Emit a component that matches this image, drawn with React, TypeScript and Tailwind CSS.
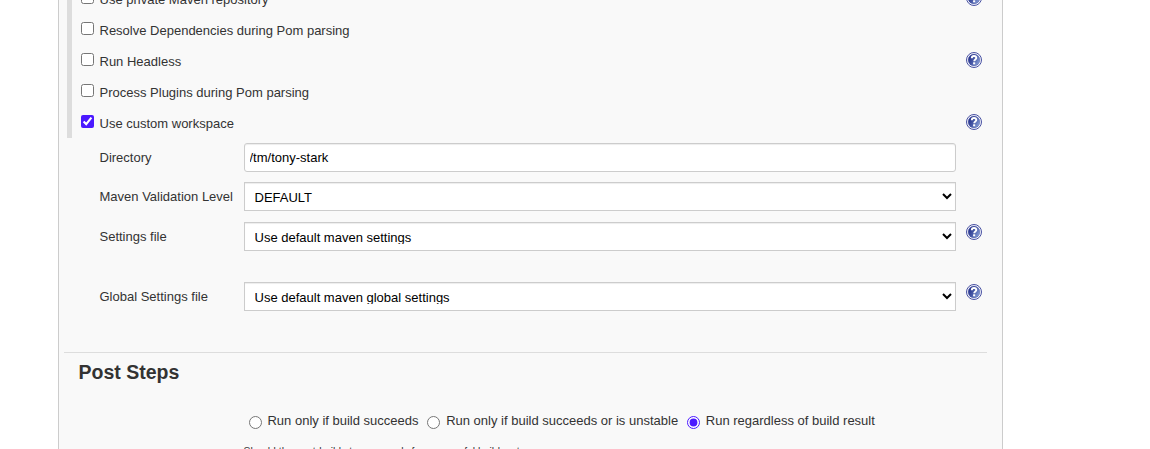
import React from "react";

function HelpIcon() {
  return (
    <svg width="16" height="16" viewBox="0 0 16 16" className="block shrink-0" aria-label="Help">
      <defs>
        <linearGradient id="help-fill" x1="0" y1="0.2" x2="1" y2="0.8">
          <stop offset="0.1" stopColor="#26338c" />
          <stop offset="0.5" stopColor="#4a5ba8" />
          <stop offset="1" stopColor="#8ea6dc" />
        </linearGradient>
      </defs>
      <circle cx="8" cy="8" r="7.5" fill="#ffffff" stroke="#4750a2" strokeWidth="1" />
      <circle cx="8" cy="8" r="5.9" fill="url(#help-fill)" stroke="#3f4b9e" strokeWidth="0.4" />
      <path d="M5.8 6.2C5.8 4.7 6.7 4 8 4c1.4 0 2.3.8 2.3 2C10.3 7.4 8.2 7.5 8.2 9.3" fill="none" stroke="#fff" strokeWidth="1.9" />
      <rect x="7.1" y="10.3" width="2.1" height="2" fill="#fff" />
    </svg>
  );
}

function CheckRow({ label, checked = false, help = false }: { label: string; checked?: boolean; help?: boolean }) {
  return (
    <div className="flex h-[31px] items-start border-l-[5px] border-[#dddddd] pl-[9px]">
      <label className="flex w-[885px] items-start">
        <input type="checkbox" defaultChecked={checked} className="mt-2 size-[13px] shrink-0 accent-[#4b19ff]" />
        <span className="mt-[9px] ml-[5.5px] leading-[15px]">{label}</span>
      </label>
      {help && <div className="pt-[7px]"><HelpIcon /></div>}
    </div>
  );
}

function SelectRow({ label, value, help = false }: { label: string; value: string; help?: boolean }) {
  return (
    <div className="flex h-[29px] items-start pl-[32.5px]">
      <span className="mt-[7px] w-[144.5px] shrink-0 leading-[15px]">{label}</span>
      <select className="h-[29px] w-[712px] shrink-0 rounded-none border border-[#cccccc] bg-white px-[5.5px] py-[6px] text-[13px] text-black shadow-[inset_0_1px_1px_rgba(0,0,0,0.075)]">
        <option>{value}</option>
      </select>
      {help && <div className="pl-[10px] pt-[2px]"><HelpIcon /></div>}
    </div>
  );
}

function RadioOption({ label, checked = false }: { label: string; checked?: boolean }) {
  return (
    <label className="flex items-start">
      <input type="radio" name="post-steps" defaultChecked={checked} className="mt-[3px] size-[13px] shrink-0 accent-[#4b19ff]" />
      <span className="ml-[5.8px] leading-[15px]">{label}</span>
    </label>
  );
}

export default function App() {
  return (
    <div className="h-[449px] overflow-hidden bg-white font-['Liberation_Sans',Arial,sans-serif] text-[13px] text-[#333333]">
      <main className="ml-[58px] h-[449px] w-[945px] overflow-hidden border-x border-[#cccccc] bg-[#f9f9f9]">
        <div className="-mt-[17px] pl-2">
          <CheckRow label="Use private Maven repository" help />
          <CheckRow label="Resolve Dependencies during Pom parsing" />
          <CheckRow label="Run Headless" help />
          <CheckRow label="Process Plugins during Pom parsing" />
          <CheckRow label="Use custom workspace" checked help />
          <div className="mt-[5px] flex h-[29px] items-start pl-[32.5px]">
            <span className="mt-[7px] w-[144.5px] shrink-0 leading-[15px]">Directory</span>
            <input
              type="text"
              defaultValue="/tm/tony-stark"
              className="h-[29px] w-[712px] rounded-[3px] border border-[#cccccc] bg-white px-[4.5px] text-[13px] text-black shadow-[inset_0_1px_1px_rgba(0,0,0,0.075)]"
            />
          </div>
          <div className="mt-[10px]"><SelectRow label="Maven Validation Level" value="DEFAULT" /></div>
          <div className="mt-[11px]"><SelectRow label="Settings file" value="Use default maven settings" help /></div>
          <div className="mt-[31px]"><SelectRow label="Global Settings file" value="Use default maven global settings" help /></div>
        </div>
        <section className="mt-[41px] ml-[5px] w-[923px] border-t border-[#dddddd]">
          <h2 className="mt-2 ml-[14.5px] text-[19.5px] leading-[22px] font-bold">Post Steps</h2>
          <div className="mt-[30px] ml-[184.7px] flex gap-[8.85px]">
            <RadioOption label="Run only if build succeeds" />
            <RadioOption label="Run only if build succeeds or is unstable" />
            <RadioOption label="Run regardless of build result" checked />
          </div>
          <p className="mt-[17px] ml-[179.5px] text-[10.4px] leading-[12px]">Should the post-build steps run only for successful builds, etc.</p>
        </section>
      </main>
    </div>
  );
}
